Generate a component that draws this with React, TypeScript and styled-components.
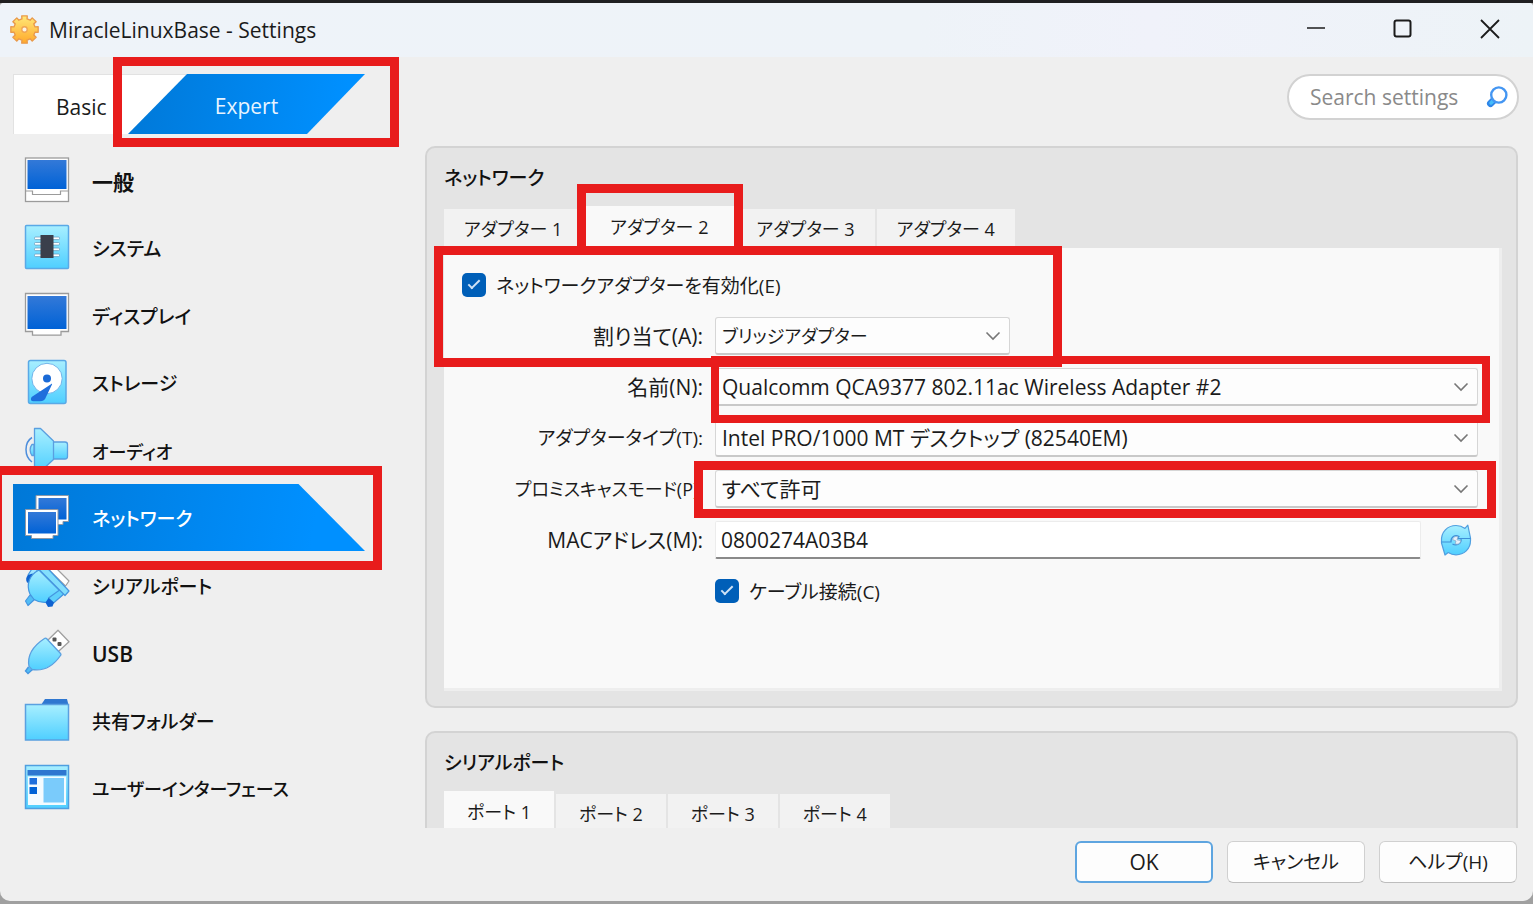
import React, { useState } from "react";
import styled, { createGlobalStyle, css } from "styled-components";

const size = { small: "18px", medium: "19px", large: "21px" };
type Size = keyof typeof size;

const GlobalStyle = createGlobalStyle`
  *, *::before, *::after { box-sizing: border-box; }
  html, body { margin: 0; padding: 0; }
  body {
    background: #a0a0a0;
    color: #1b1b1b;
    font-family: "Open Sans", "Noto Sans CJK JP", sans-serif;
    font-size: ${size.large};
    line-height: 30px;
    font-feature-settings: "palt";
  }
  button, input, select {
    font: inherit;
    font-feature-settings: inherit;
    color: inherit;
    margin: 0;
  }
`;

/* ---------- window frame ---------- */

const Desktop = styled.div`
  height: 100vh;
  min-height: 860px;
  display: flex;
  flex-direction: column;
  padding-bottom: 3px;
  border-top: 3px solid #1f1f21;
`;

const Window = styled.div`
  flex: 1;
  min-height: 0;
  display: flex;
  flex-direction: column;
  overflow: hidden;
  background: #efefef;
  border-radius: 4px 4px 10px 10px;
`;

const TitleBar = styled.header`
  flex: none;
  height: 54px;
  display: flex;
  align-items: center;
  padding: 0 0 2px 9px;
  background: linear-gradient(90deg, #eef3f9, #eef3f8 60%, #f0f2fa 75%, #edf3f7);
`;

const WindowTitle = styled.h1`
  flex: 1;
  margin: 0 0 0 9px;
  padding-top: 2px;
  font-size: ${size.large};
  font-weight: 400;
`;

const CaptionButton = styled.button`
  width: 87px;
  height: 52px;
  padding: 0;
  border: 0;
  background: none;
  display: grid;
  place-items: center;
`;

const TopRow = styled.div`
  flex: none;
  height: 89px;
  padding: 17px 14px 0 13px;
  display: flex;
  justify-content: space-between;
  align-items: flex-start;
`;

const ModeSwitch = styled.div`
  position: relative;
  display: flex;
`;

const ModeButton = styled.button<{ $active?: boolean }>`
  height: 60px;
  padding: 4px 0 0;
  border: 0;
  ${({ $active }) =>
    $active
      ? css`
          width: 237px;
          margin-left: -59px;
          color: #e8f4ff;
          background: linear-gradient(100deg, #0078d7, #0090ff 90%);
          clip-path: polygon(59px 0, 100% 0, calc(100% - 58px) 100%, 0 100%);
        `
      : css`
          width: 174px;
          padding-left: 42px;
          text-align: left;
          background: #fff;
          border-top: 1px solid #e2e2e2;
          border-left: 1px solid #e2e2e2;
          clip-path: polygon(0 0, 100% 0, calc(100% - 59px) 100%, 0 100%);
        `}
`;

const SearchBox = styled.label`
  width: 232px;
  height: 46px;
  display: flex;
  align-items: center;
  padding: 0 9px 0 21px;
  border: 2px solid #d2d2d2;
  border-radius: 23px;
  background: #fff;
`;

const SearchInput = styled.input`
  flex: 1;
  min-width: 0;
  padding: 0;
  border: 0;
  outline: 0;
  background: none;
  &::placeholder { color: #8a8a8a; opacity: 1; }
`;

const Body = styled.div`
  flex: 1;
  min-height: 0;
  display: grid;
  grid-template-columns: 352px minmax(0, 1fr);
  column-gap: 60px;
  padding: 0 15px 0 13px;
`;

const Footer = styled.footer`
  flex: none;
  display: flex;
  justify-content: flex-end;
  gap: 14px;
  padding: 13px 16px 18px;
`;

const DialogButton = styled.button<{ $primary?: boolean }>`
  width: 138px;
  height: 42px;
  padding: 0;
  border: ${({ $primary }) => ($primary ? "2px solid #5ea5e0" : "1px solid #d0d0d0")};
  border-bottom-color: ${({ $primary }) => ($primary ? "#5ea5e0" : "#bdbdbd")};
  border-radius: 6px;
  background: #fdfdfd;
  font-size: ${({ $primary }) => ($primary ? size.large : size.medium)};
`;

/* ---------- red call-out frames ---------- */

const Callout = styled.span<{
  $top: number;
  $left: number;
  $right: number;
  $bottom: number;
  $thick?: number;
}>`
  position: absolute;
  top: ${(p) => p.$top}px;
  left: ${(p) => p.$left}px;
  right: ${(p) => p.$right}px;
  bottom: ${(p) => p.$bottom}px;
  border: ${(p) => p.$thick ?? 9}px solid #e81c1c;
  pointer-events: none;
  z-index: 2;
`;

/* ---------- sidebar ---------- */

const Nav = styled.nav`
  display: grid;
  grid-auto-rows: 1fr;
  height: 675px;
`;

const NavItem = styled.div`
  position: relative;
  display: grid;
`;

const NavLink = styled.a<{ $active?: boolean; $size: Size }>`
  display: flex;
  align-items: center;
  gap: 22px;
  padding-left: 11px;
  font-size: ${({ $size }) => size[$size]};
  font-weight: ${({ $size }) => ($size === "large" ? 600 : 500)};
  color: #111;
  text-decoration: none;
  ${({ $active }) =>
    $active &&
    css`
      color: #fff;
      background: linear-gradient(100deg, #0078d7, #0090ff 85%);
      clip-path: polygon(0 0, calc(100% - 67px) 0, 100% 100%, 0 100%);
    `}
  svg { flex: none; }
`;

const NavText = styled.span`
  padding-top: 4px;
`;

/* ---------- settings panels ---------- */

const Panels = styled.main`
  display: flex;
  flex-direction: column;
  gap: 23px;
  overflow: hidden;
`;

const Panel = styled.section`
  flex: none;
  padding: 14px 14px 15px 17px;
  border: 2px solid #d3d3d3;
  border-radius: 10px;
  background: #e4e4e4;
`;

const PanelTitle = styled.h2`
  margin: 0 0 12px;
  font-size: ${size.medium};
  line-height: 32px;
  font-weight: 500;
  color: #111;
`;

const TabList = styled.div`
  display: flex;
  align-items: flex-end;
  gap: 2px;
`;

const Tab = styled.button<{ $active?: boolean; $even?: boolean }>`
  position: relative;
  height: ${({ $active }) => ($active ? 42 : 39)}px;
  padding: 0 ${({ $active, $even }) => ($even ? 23 : $active ? 26 : 20)}px;
  border: 0;
  background: ${({ $active }) => ($active ? "#f9f9f9" : "#f2f2f2")};
  font-size: ${size.small};
  line-height: 24px;
`;

const Pane = styled.div`
  display: grid;
  grid-template-columns: 241px minmax(0, 1fr);
  grid-auto-rows: 38px;
  gap: 13px 12px;
  min-height: 443px;
  padding: 18px 21px 0 18px;
  border-right: 3px solid #eeeeee;
  border-bottom: 3px solid #eeeeee;
  background: #f9f9f9;
  align-content: start;
`;

const FieldLabel = styled.label<{ $size?: Size }>`
  align-self: center;
  justify-self: end;
  white-space: nowrap;
  font-size: ${({ $size }) => size[$size ?? "medium"]};
`;

const CheckLabel = styled.label<{ $wide?: boolean }>`
  grid-column: ${({ $wide }) => ($wide ? "1 / -1" : "2")};
  display: flex;
  align-items: center;
  gap: 10px;
  font-size: ${size.medium};
`;

const CheckText = styled.span`
  padding-top: 2px;
`;

const Check = styled.input`
  appearance: none;
  width: 24px;
  height: 24px;
  border-radius: 5px;
  background: #005fb8;
  display: grid;
  place-items: center;
  &:checked::before {
    content: "";
    width: 12px;
    height: 6px;
    border-left: 2px solid #cfe3f6;
    border-bottom: 2px solid #cfe3f6;
    transform: translateY(-2px) rotate(-45deg);
  }
`;

const SelectBox = styled.div<{ $short?: boolean }>`
  position: relative;
  display: flex;
  align-items: center;
  width: ${({ $short }) => ($short ? "295px" : "100%")};
  svg { position: absolute; right: 9px; pointer-events: none; }
`;

const Select = styled.select<{ $size?: Size }>`
  appearance: none;
  width: 100%;
  height: 38px;
  padding: 0 32px 0 6px;
  border: 1px solid #d6d6d6;
  border-bottom: 2px solid #c9c9c9;
  border-radius: 3px;
  background: #fdfdfd;
  font-size: ${({ $size }) => size[$size ?? "large"]};
`;

const MacRow = styled.div`
  display: flex;
  align-items: center;
  gap: 19px;
  padding-right: 6px;
`;

const MacInput = styled.input`
  flex: 1;
  min-width: 0;
  height: 38px;
  padding: 0 5px;
  border: 1px solid #ececec;
  border-bottom: 2px solid #8a8a8a;
  border-radius: 2px;
  background: #fff;
  outline: 0;
`;

const IconButton = styled.button`
  padding: 0;
  border: 0;
  background: none;
  display: grid;
`;

/* ---------- drawings ---------- */

const HiddenSvg = styled.svg`
  position: absolute;
`;

const Gradients = () => (
  <HiddenSvg width="0" height="0" aria-hidden="true">
    <defs>
      <linearGradient id="sky" x1="0" y1="0" x2="0" y2="1">
        <stop offset="0" stopColor="#a8efff" />
        <stop offset="1" stopColor="#4fcfff" />
      </linearGradient>
      <linearGradient id="screen" x1="0" y1="0" x2="0" y2="1">
        <stop offset="0" stopColor="#3379d8" />
        <stop offset="1" stopColor="#0062d6" />
      </linearGradient>
      <linearGradient id="gold" x1="0" y1="0" x2="0" y2="1">
        <stop offset="0" stopColor="#ffe878" />
        <stop offset="1" stopColor="#ffa92b" />
      </linearGradient>
    </defs>
  </HiddenSvg>
);

const gearPath = (() => {
  const points: string[] = [];
  const teeth = 8;
  for (let i = 0; i < teeth; i++) {
    const base = (i / teeth) * Math.PI * 2 - Math.PI / 2;
    const corners: [number, number][] = [
      [-0.24, 11.2],
      [-0.2, 14.4],
      [0.2, 14.4],
      [0.24, 11.2],
    ];
    corners.forEach(([da, r]) => {
      points.push(`${(16 + r * Math.cos(base + da)).toFixed(2)} ${(16 + r * Math.sin(base + da)).toFixed(2)}`);
    });
  }
  return `M${points.join("L")}Z`;
})();

const GearIcon = () => (
  <svg width="31" height="31" viewBox="0 0 32 32" aria-hidden="true">
    <path d={gearPath} fill="url(#gold)" stroke="#e99a4c" strokeWidth="1.4" strokeLinejoin="round" />
    <circle cx="16" cy="16" r="2.8" fill="#fdf3e2" stroke="#f0a553" strokeWidth="1.4" />
  </svg>
);

const Chevron = () => (
  <svg width="16" height="10" viewBox="0 0 16 10" fill="none" stroke="#777" strokeWidth="1.6" aria-hidden="true">
    <path d="M1.5 1.5 8 8l6.5-6.5" />
  </svg>
);

const SearchIcon = () => (
  <svg width="22" height="22" viewBox="0 0 22 22" aria-hidden="true">
    <path d="M8 14 4.500 17.500" stroke="#2f86e8" strokeWidth="7" strokeLinecap="round" />
    <path d="M7.500 14.500 5 17" stroke="#45bdfb" strokeWidth="3.500" strokeLinecap="round" />
    <circle cx="12.800" cy="9" r="7.600" fill="#fff" stroke="#4496f2" strokeWidth="2.400" />
  </svg>
);

const RefreshIcon = () => (
  <svg width="32" height="32" viewBox="0 0 32 32" aria-hidden="true">
    <path
      d="M1.500 17C1 8 7.500 1.500 16 1.500c3.500 0 6.500 1 9 2.900L27.800 1.200 30.500 14v2.500C30.500 25 24 30.800 16 30.800c-3 0-5.500-.8-7.800-2.300L5 31 1.500 19Z"
      fill="url(#sky)"
      stroke="#4f9fe0"
      strokeWidth="1.2"
      strokeLinejoin="round"
    />
    <path d="M1.500 18H11c-.5-5 4-8 8-5.500l-1.500 2H30.500M21 14.500c1 5-4.500 8-8.500 5.500" fill="none" stroke="#3f8fd8" strokeWidth="1.2" />
    <path d="M12.500 15.500c1-3 3.500-3.500 5.500-2.500l-1 2.800 3.800.7c-.3 3-2.800 4.300-5.600 3.300l.8-2.800Z" fill="#e9f1fa" stroke="#8aa9cc" strokeWidth=".8" />
  </svg>
);

const Svg = ({ children }: { children: React.ReactNode }) => (
  <svg width="46" height="46" viewBox="0 0 46 46" aria-hidden="true">
    {children}
  </svg>
);

const GeneralIcon = () => (
  <Svg>
    <rect x="1.500" y="1" width="43" height="43.500" fill="#fff" stroke="#9b9b9b" strokeWidth="1.300" />
    <rect x="3.500" y="3" width="39" height="29" fill="url(#screen)" />
    <path d="M1.500 34h7v3.500h28V34h8" fill="none" stroke="#9b9b9b" strokeWidth="1.200" />
  </Svg>
);

const SystemIcon = () => (
  <Svg>
    <rect x="1.500" y="1.500" width="43" height="43" rx="1" fill="url(#sky)" stroke="#5aa9e6" strokeWidth="1.500" />
    {[13, 18.5, 24, 30].map((y) => (
      <rect key={y} x="10.500" y={y} width="25" height="2.600" rx="1" fill="#fff" stroke="#6ca0bf" strokeWidth=".8" />
    ))}
    <rect x="16.500" y="11" width="13" height="23" fill="#3a3f4b" />
  </Svg>
);

const DisplayIcon = () => (
  <Svg>
    <path d="M1.500 1.500h43v38h-7.500v3.700H8.500v-3.700h-7Z" fill="#fff" stroke="#9b9b9b" strokeWidth="1.300" />
    <rect x="3.500" y="4" width="39" height="33" fill="url(#screen)" />
  </Svg>
);

const StorageIcon = () => (
  <Svg>
    <rect x="4.500" y="1.500" width="37.500" height="43" rx="2" fill="url(#sky)" stroke="#5aa9e6" strokeWidth="1.500" />
    <circle cx="23" cy="19.500" r="15.200" fill="#fff" stroke="#6fb4ea" />
    <circle cx="23" cy="19.500" r="4" fill="#1a6ad6" />
    <path d="M28 25.500 22 38c-1 3-3 4.200-6 4.200H9c-2.500 0-2.500-3-1-4.500L27 25.200c.8-.6 1.400-.3 1 .3Z" fill="#1f6fdc" />
  </Svg>
);

const AudioIcon = () => (
  <Svg>
    <g fill="url(#sky)" stroke="#5a9fe0" strokeWidth="1.300" strokeLinejoin="round">
      <path d="M10 17.500H8c-2.500 3-2.500 8 0 11h2Z" />
      <path d="M28 15h13c1.500 0 2.500 1 2.500 2.500v12c0 1.500-1 2.500-2.500 2.500H28Z" />
      <path d="M10.500 1.500h6L29.500 14v18.500l-13 12h-6Z" />
    </g>
    <path d="M8 10.500c-8 5-8 19 0 24.500" fill="none" stroke="#4d8edc" strokeWidth="1.500" />
  </Svg>
);

const NetworkIcon = () => (
  <Svg>
    <path d="M12 1.500h32.500v26h-5.500v3H16v-3h-4Z" fill="#fff" stroke="#8c98a8" />
    <rect x="14.500" y="4" width="28" height="21.500" fill="url(#screen)" />
    <path d="M1.500 15.500H34v26h-5v3H7.500v-3h-6Z" fill="#fff" stroke="#8c98a8" />
    <rect x="4" y="18" width="28" height="21.500" fill="url(#screen)" />
  </Svg>
);

const SerialIcon = () => (
  <Svg>
    <g strokeLinejoin="round" strokeWidth="1.200">
      <path d="M27 1 45 19l-3.500 5L22 5Z" fill="#fff" stroke="#a0a0a0" />
      <path d="M15 4 11 2 4 13l5 5Z" fill="#9fe6ff" stroke="#4596e0" />
      <path d="m4 13 4.500-1.500 3 5L8 22l-5-1.500c-1.500-2.500-1-5.500 1-7.500Z" fill="#0f62d0" />
      <path d="m6 33-4.500 6 2.500 4.500L11 37Z" fill="#52bdf5" stroke="#4596e0" />
      <path d="M15 8C5 13 2 23 6 32l4 5.500c9 5.500 21 3 29-5.500Z" fill="url(#sky)" stroke="#4596e0" />
      <path d="m37 27 4 4-11.500 10-5-5Z" fill="#5fd0fb" stroke="#4596e0" />
      <path d="m24.500 36 5.500 4.500-1.500 4-4.500.5-2.500-4.500Z" fill="#0f62d0" />
      <path d="m14 6.500 5-5 26 27.500-4 4.500Z" fill="#83dffc" stroke="#4596e0" />
    </g>
  </Svg>
);

const UsbIcon = () => (
  <Svg>
    <path d="m34 1.200 11 11.500-11.500 10.500L23 12Z" fill="#fff" stroke="#a0a0a0" strokeWidth="1.300" strokeLinejoin="round" />
    <rect x="28.500" y="8.500" width="4" height="4" rx="1" fill="#555" />
    <rect x="33.500" y="13" width="4" height="4" rx="1" fill="#555" />
    <path d="M4.500 38 1.500 42l2.500 2.500 4.500-4" fill="#52bdf5" stroke="#4596e0" strokeWidth="1.400" />
    <path d="M20.500 9.500c.6-.6 1.500-.6 2 0l14 15c.6.600.6 1.500 0 2C30 36 20 42.500 8 40.500l-3-3C3 26.500 9 17 20.500 9.500Z" fill="url(#sky)" stroke="#5a9fe0" strokeWidth="1.300" />
  </Svg>
);

const FolderIcon = () => (
  <Svg>
    <path d="M17 8 21 2h22l1.500 6Z" fill="#2f77d0" />
    <rect x="1.500" y="7.500" width="43" height="35.500" fill="url(#sky)" stroke="#5aa0e0" strokeWidth="1.500" />
  </Svg>
);

const UiIcon = () => (
  <Svg>
    <rect x="1.500" y="1.500" width="43" height="43" fill="url(#sky)" stroke="#4f9fe0" strokeWidth="1.500" />
    <rect x="3.500" y="6" width="39" height="5.500" fill="#2f77d0" />
    <rect x="4" y="12.500" width="38" height="28.500" fill="#f4fbff" />
    <rect x="5.500" y="14" width="7.500" height="6.500" fill="#1f6fdc" />
    <rect x="5.500" y="23" width="7.500" height="7" fill="#0062d6" />
    <rect x="19.500" y="14" width="20.500" height="24.500" fill="#7acbfb" />
  </Svg>
);

/* ---------- data ---------- */

const sections: { label: string; Icon: React.FC; size: Size }[] = [
  { label: "一般", Icon: GeneralIcon, size: "large" },
  { label: "システム", Icon: SystemIcon, size: "medium" },
  { label: "ディスプレイ", Icon: DisplayIcon, size: "medium" },
  { label: "ストレージ", Icon: StorageIcon, size: "medium" },
  { label: "オーディオ", Icon: AudioIcon, size: "small" },
  { label: "ネットワーク", Icon: NetworkIcon, size: "medium" },
  { label: "シリアルポート", Icon: SerialIcon, size: "medium" },
  { label: "USB", Icon: UsbIcon, size: "large" },
  { label: "共有フォルダー", Icon: FolderIcon, size: "medium" },
  { label: "ユーザーインターフェース", Icon: UiIcon, size: "small" },
];

const ACTIVE_SECTION = 5;

export default function App() {
  const [adapter, setAdapter] = useState(2);
  const [port, setPort] = useState(1);

  return (
    <Desktop>
      <GlobalStyle />
      <Gradients />
      <Window>
        <TitleBar>
          <GearIcon />
          <WindowTitle>MiracleLinuxBase - Settings</WindowTitle>
          <CaptionButton aria-label="Minimize">
            <svg width="20" height="20" viewBox="0 0 20 20" stroke="#1b1b1b" strokeWidth="1.600">
              <path d="M1 9h18" />
            </svg>
          </CaptionButton>
          <CaptionButton aria-label="Maximize">
            <svg width="20" height="20" viewBox="0 0 20 20" fill="none" stroke="#1b1b1b" strokeWidth="2">
              <rect x="1.500" y="1.500" width="16" height="16" rx="2" />
            </svg>
          </CaptionButton>
          <CaptionButton aria-label="Close">
            <svg width="20" height="20" viewBox="0 0 20 20" stroke="#1b1b1b" strokeWidth="1.800">
              <path d="m1 1 18 18M19 1 1 19" />
            </svg>
          </CaptionButton>
        </TitleBar>

        <TopRow>
          <ModeSwitch>
            <ModeButton>Basic</ModeButton>
            <ModeButton $active>Expert</ModeButton>
            <Callout $top={-17} $left={100} $right={-34} $bottom={-13} />
          </ModeSwitch>
          <SearchBox>
            <SearchInput type="text" placeholder="Search settings" aria-label="Search settings" />
            <SearchIcon />
          </SearchBox>
        </TopRow>

        <Body>
          <Nav>
            {sections.map(({ label, Icon, size: textSize }, i) => (
              <NavItem key={label}>
                <NavLink href="#" $active={i === ACTIVE_SECTION} $size={textSize}>
                  <Icon />
                  <NavText>{label}</NavText>
                </NavLink>
                {i === ACTIVE_SECTION && <Callout $top={-18} $left={-20} $right={-17} $bottom={-19} />}
              </NavItem>
            ))}
          </Nav>

          <Panels>
            <Panel>
              <PanelTitle>ネットワーク</PanelTitle>
              <TabList role="tablist">
                {[1, 2, 3, 4].map((n) => (
                  <Tab key={n} role="tab" aria-selected={adapter === n} $active={adapter === n} onClick={() => setAdapter(n)}>
                    アダプター {n}
                    {n === 2 && <Callout $top={-22} $left={-7} $right={-9} $bottom={-7} />}
                  </Tab>
                ))}
              </TabList>
              <Pane>
                <CheckLabel $wide>
                  <Check type="checkbox" defaultChecked />
                  <CheckText>ネットワークアダプターを有効化(E)</CheckText>
                </CheckLabel>

                <FieldLabel htmlFor="attached" $size="large">割り当て(A):</FieldLabel>
                <SelectBox $short>
                  <Select id="attached" $size="small">
                    <option>ブリッジアダプター</option>
                  </Select>
                  <Chevron />
                  <Callout $top={-71} $left={-281} $right={-52} $bottom={-12} />
                </SelectBox>

                <FieldLabel htmlFor="name" $size="large">名前(N):</FieldLabel>
                <SelectBox>
                  <Select id="name">
                    <option>Qualcomm QCA9377 802.11ac Wireless Adapter #2</option>
                  </Select>
                  <Chevron />
                  <Callout $top={-12} $left={-4} $right={-12} $bottom={-17} $thick={8} />
                </SelectBox>

                <FieldLabel htmlFor="type">アダプタータイプ(T):</FieldLabel>
                <SelectBox>
                  <Select id="type">
                    <option>Intel PRO/1000 MT デスクトップ (82540EM)</option>
                  </Select>
                  <Chevron />
                </SelectBox>

                <FieldLabel htmlFor="promisc" $size="small">プロミスキャスモード(P):</FieldLabel>
                <SelectBox>
                  <Select id="promisc">
                    <option>すべて許可</option>
                  </Select>
                  <Chevron />
                  <Callout $top={-9} $left={-21} $right={-18} $bottom={-10} />
                </SelectBox>

                <FieldLabel htmlFor="mac" $size="large">MACアドレス(M):</FieldLabel>
                <MacRow>
                  <MacInput id="mac" type="text" defaultValue="0800274A03B4" />
                  <IconButton aria-label="Refresh">
                    <RefreshIcon />
                  </IconButton>
                </MacRow>

                <CheckLabel>
                  <Check type="checkbox" defaultChecked />
                  <CheckText>ケーブル接続(C)</CheckText>
                </CheckLabel>
              </Pane>
            </Panel>

            <Panel>
              <PanelTitle>シリアルポート</PanelTitle>
              <TabList role="tablist">
                {[1, 2, 3, 4].map((n) => (
                  <Tab key={n} role="tab" $even aria-selected={port === n} $active={port === n} onClick={() => setPort(n)}>
                    ポート {n}
                  </Tab>
                ))}
              </TabList>
            </Panel>
          </Panels>
        </Body>

        <Footer>
          <DialogButton $primary>OK</DialogButton>
          <DialogButton>キャンセル</DialogButton>
          <DialogButton>ヘルプ(H)</DialogButton>
        </Footer>
      </Window>
    </Desktop>
  );
}
